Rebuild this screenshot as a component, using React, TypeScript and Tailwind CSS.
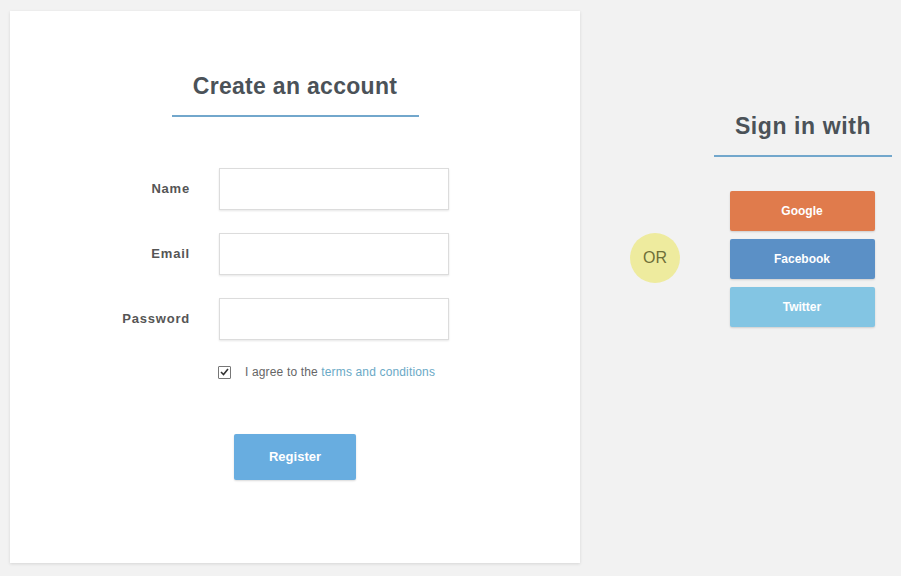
import React from "react";

export default function App() {
  const font = { fontFamily: '"Liberation Sans", Arial, sans-serif' };
  return (
    <div className="w-[901px] h-[576px] bg-[#f2f2f2] flex items-start overflow-hidden" style={font}>
      {/* Card */}
      <div className="ml-[10px] mt-[11px] w-[570px] h-[552px] bg-white shadow-[0_1px_3px_rgba(0,0,0,0.12)] flex flex-col items-center">
        <div className="mt-[61px] w-[247px] border-b-2 border-[#72a7cc] pb-[15px] text-center text-[23px] font-bold tracking-[0.3px] leading-[28px] text-[#4b5258]">
          Create an account
        </div>
        <div className="self-start mt-[51px] flex flex-col gap-[23px]">
          {["Name", "Email", "Password"].map((l) => (
            <div key={l} className="flex items-center">
              <label className="w-[180px] text-right text-[13px] font-bold tracking-[0.8px] text-[#555]">{l}</label>
              <input
                type={l === "Password" ? "password" : "text"}
                className="ml-[29px] w-[230px] h-[42px] border border-[#dcdcdc] bg-white shadow-[0_1px_2px_rgba(0,0,0,0.1)] outline-none"
              />
            </div>
          ))}
          <div className="flex items-center ml-[208px]">
            <span className="w-[13px] h-[13px] border border-[#777] rounded-[1px] flex items-center justify-center bg-white">
              <svg width="9" height="8" viewBox="0 0 9 8">
                <path d="M1 4 L3.5 6.5 L8 1" fill="none" stroke="#333" strokeWidth="1.6" />
              </svg>
            </span>
            <span className="ml-[14px] text-[12px] tracking-[0.15px] text-[#666]">
              I agree to the <span className="text-[#6aa9c6]">terms and conditions</span>
            </span>
          </div>
          <button className="ml-[224px] mt-[30px] w-[122px] h-[46px] rounded-[2px] bg-[#68ade0] text-white text-[13px] font-bold shadow-[0_1px_2px_rgba(0,0,0,0.15)]">
            Register
          </button>
        </div>
      </div>
      {/* Right */}
      <div className="ml-[50px] mt-[233px] w-[50px] h-[50px] rounded-full bg-[#eeeb9e] flex items-center justify-center text-[16px] text-[#6f6f38]">
        OR
      </div>
      <div className="ml-[34px] mt-[112px] w-[178px] flex flex-col items-center">
        <div className="w-full border-b-2 border-[#72a7cc] pb-[15px] text-center text-[23px] font-bold tracking-[0.6px] leading-[28px] text-[#4b5258]">
          Sign in with
        </div>
        <div className="mt-[34px] -ml-[2px] flex flex-col gap-[8px]">
          <button className="w-[145px] h-[40px] rounded-[2px] bg-[#e07b4c] text-white text-[12px] font-bold shadow-[0_1px_2px_rgba(0,0,0,0.15)]">Google</button>
          <button className="w-[145px] h-[40px] rounded-[2px] bg-[#5b90c6] text-white text-[12px] font-bold shadow-[0_1px_2px_rgba(0,0,0,0.15)]">Facebook</button>
          <button className="w-[145px] h-[40px] rounded-[2px] bg-[#83c5e3] text-white text-[12px] font-bold shadow-[0_1px_2px_rgba(0,0,0,0.15)]">Twitter</button>
        </div>
      </div>
    </div>
  );
}
